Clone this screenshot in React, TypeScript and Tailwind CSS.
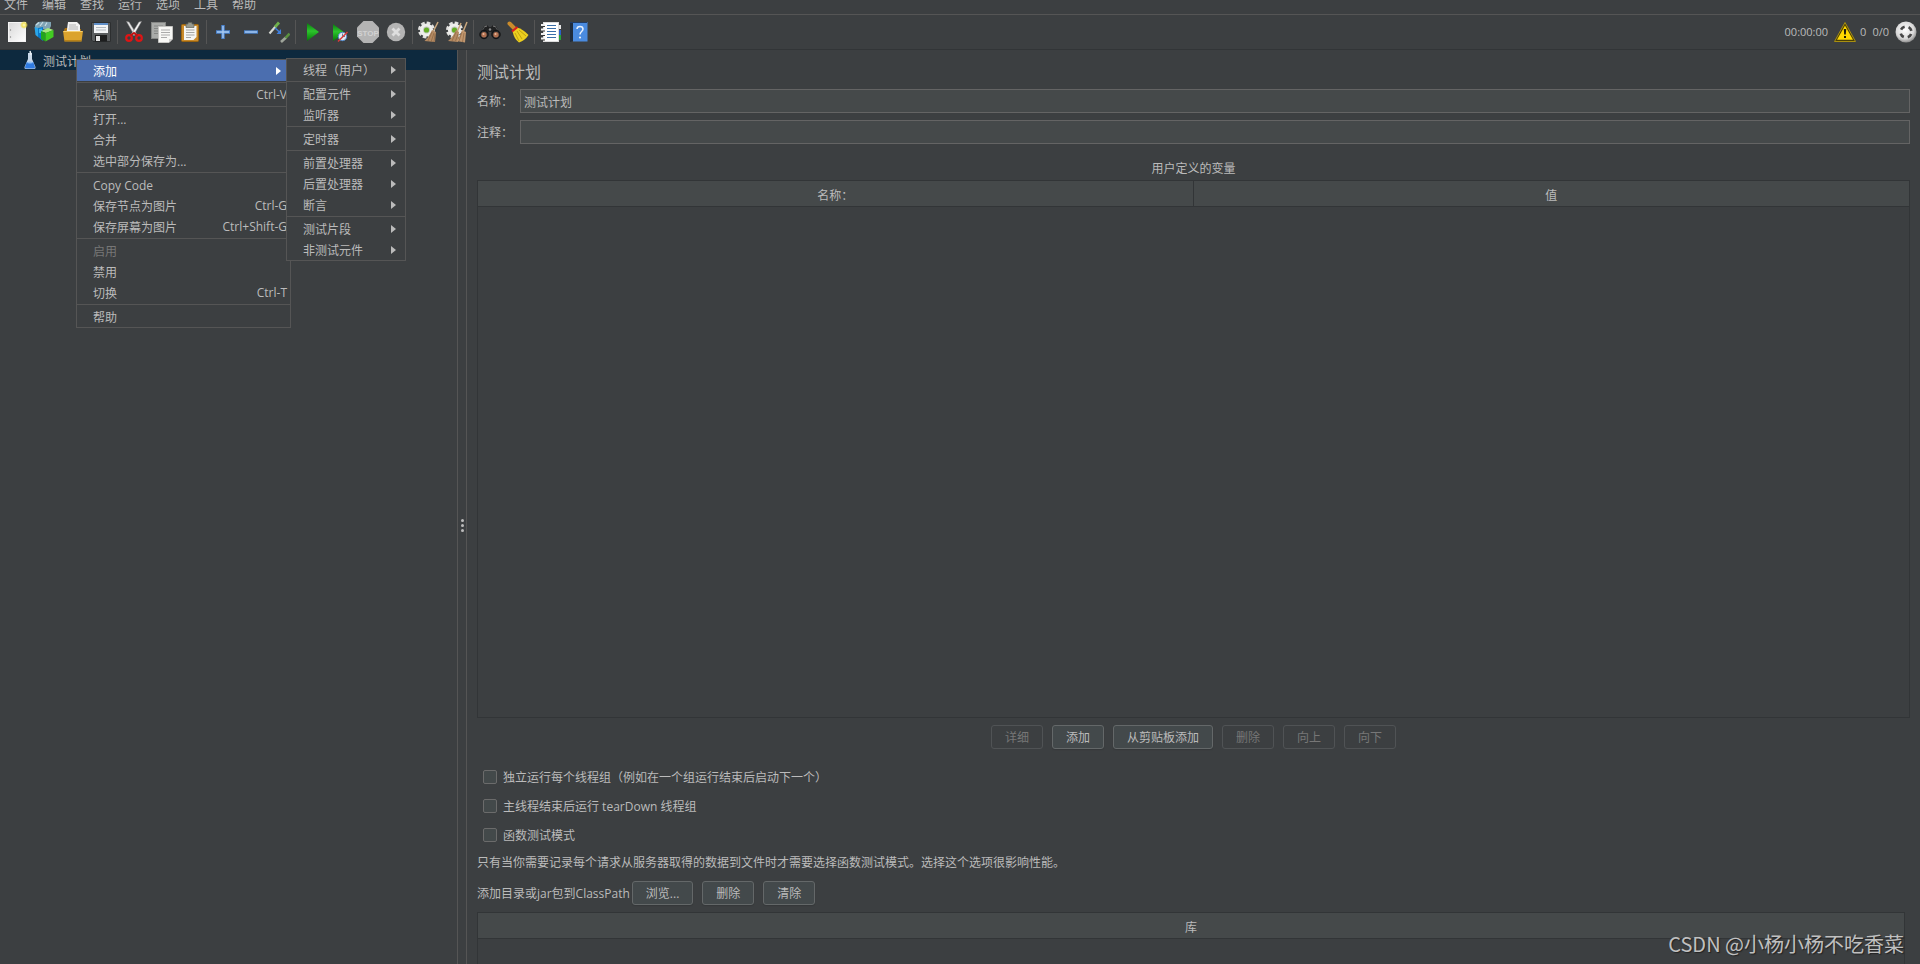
import React from "react";

type MenuEntry = {
  label: string;
  shortcut?: string;
  submenu?: boolean;
  active?: boolean;
  disabled?: boolean;
};

const menuBar = ["文件", "编辑", "查找", "运行", "选项", "工具", "帮助"];

const contextMenu: MenuEntry[][] = [
  [{ label: "添加", submenu: true, active: true }],
  [{ label: "粘贴", shortcut: "Ctrl-V" }],
  [{ label: "打开..." }, { label: "合并" }, { label: "选中部分保存为..." }],
  [
    { label: "Copy Code" },
    { label: "保存节点为图片", shortcut: "Ctrl-G" },
    { label: "保存屏幕为图片", shortcut: "Ctrl+Shift-G" },
  ],
  [{ label: "启用", disabled: true }, { label: "禁用" }, { label: "切换", shortcut: "Ctrl-T" }],
  [{ label: "帮助" }],
];

const addMenu: MenuEntry[][] = [
  [{ label: "线程（用户）", submenu: true }],
  [
    { label: "配置元件", submenu: true },
    { label: "监听器", submenu: true },
  ],
  [{ label: "定时器", submenu: true }],
  [
    { label: "前置处理器", submenu: true },
    { label: "后置处理器", submenu: true },
    { label: "断言", submenu: true },
  ],
  [
    { label: "测试片段", submenu: true },
    { label: "非测试元件", submenu: true },
  ],
];

function Icon({ children }: { children: React.ReactNode }) {
  return (
    <svg viewBox="0 0 22 22" className="h-[22px] w-[22px] shrink-0" aria-hidden="true">
      {children}
    </svg>
  );
}

function NewIcon() {
  return (
    <Icon>
      <defs>
        <linearGradient id="paper" x1="0" y1="0" x2="1" y2="1">
          <stop offset="0" stopColor="#d8d8d8" />
          <stop offset="1" stopColor="#ffffff" />
        </linearGradient>
        <radialGradient id="glow">
          <stop offset="0" stopColor="#fffbd0" />
          <stop offset="0.5" stopColor="#f2e25a" />
          <stop offset="1" stopColor="#e8d840" stopOpacity="0" />
        </radialGradient>
      </defs>
      <rect x="2.5" y="1.5" width="17" height="19" fill="url(#paper)" stroke="#f4f4f4" />
      <circle cx="4.5" cy="9" r="0.7" fill="#888" />
      <circle cx="4.5" cy="16" r="0.7" fill="#888" />
      <circle cx="18" cy="4" r="4" fill="url(#glow)" />
    </Icon>
  );
}

function TemplatesIcon() {
  return (
    <Icon>
      <path d="M1 4 L4 1 L9 0.5 L17 1 L17 5 L15 9 L1 7 Z" fill="#7fa3b3" />
      <path d="M2 4 L5 1.5 M6 5 L9 1 M11 5 L13 1.5" stroke="#c9dde6" strokeWidth="1.2" />
      <path d="M0.5 6 L4 7 V16 L1.5 14 Z" fill="#2aa6ea" />
      <path d="M4 7 L9 6 V20 L4 16 Z" fill="#0a78c8" />
      <path d="M5 8 L8 7.5 V12 L5 12 Z" fill="#35b5f5" />
      <path d="M7 10 L14 7 L19.5 9 L12 12 Z" fill="#a6e87e" />
      <path d="M7 10 L11.5 12 V20.5 L7 18 Z" fill="#23a51c" />
      <path d="M11.5 12 L19.5 9 V16 L11.5 20.5 Z" fill="#42cc22" />
    </Icon>
  );
}

function OpenIcon() {
  return (
    <Icon>
      <path d="M2 9 L3 7 H8 L9 8 H19 V12 H2 Z" fill="#a87010" />
      <path d="M6 1 H15 L18 4 V12 H4.5 Z" fill="#f2f2f2" />
      <path d="M7 4 H14 M7 6 H16 M6.5 8 H16" stroke="#a5a5a5" strokeWidth="0.8" />
      <path d="M1 10 H21 L19.5 20.5 H2.5 Z" fill="#dba32d" />
      <path d="M1.5 10.5 H20.5" stroke="#f5cf70" />
      <path d="M2.5 19.8 H19.5" stroke="#a8720f" />
    </Icon>
  );
}

function SaveIcon() {
  return (
    <Icon>
      <path d="M1.5 1.5 H20.5 V20.5 H3 L1.5 19 Z" fill="#5b5e60" stroke="#2d2f30" />
      <rect x="4" y="2" width="14" height="10" fill="#f2f4f6" />
      <rect x="4" y="2" width="14" height="2" fill="#5f8fc9" />
      <path d="M6 6.5 H16 M6 9 H16" stroke="#b3bac0" />
      <rect x="5" y="14" width="12" height="6.5" fill="#1d1e1f" />
      <rect x="6" y="15" width="4" height="5" fill="#e8e8e8" />
    </Icon>
  );
}

function CutIcon() {
  return (
    <Icon>
      <path d="M3.5 0.5 L6 1 L13.5 13 L11.5 14.5 Z" fill="#e8e8e8" stroke="#8d8d8d" strokeWidth="0.5" />
      <path d="M18.5 0.5 L16 1 L8.5 13 L10.5 14.5 Z" fill="#f7f7f7" stroke="#8d8d8d" strokeWidth="0.5" />
      <circle cx="6" cy="17" r="2.8" fill="none" stroke="#dd1515" strokeWidth="2.2" />
      <circle cx="16" cy="17" r="2.8" fill="none" stroke="#dd1515" strokeWidth="2.2" />
      <path d="M7.5 14.5 L11 12 L14.5 14.5" fill="none" stroke="#c01010" strokeWidth="2" />
    </Icon>
  );
}

function CopyIcon() {
  return (
    <Icon>
      <rect x="0.5" y="1.5" width="14" height="16" fill="#a9aba9" stroke="#858785" />
      <path d="M3 5 H12 M3 7.5 H12 M3 10 H8 M3 12.5 H8" stroke="#858785" />
      <path d="M7.5 5.5 H21.5 V18 L18 21.5 H7.5 Z" fill="#f7f7f5" stroke="#c5c5c2" />
      <path d="M10 9 H19 M10 11.5 H19 M10 14 H19 M10 16.5 H16" stroke="#aaa" />
      <path d="M18 21.5 V18 H21.5 Z" fill="#cfcfcc" />
    </Icon>
  );
}

function PasteIcon() {
  return (
    <Icon>
      <rect x="2.5" y="3.5" width="17" height="17" rx="1" fill="#c98a2b" stroke="#9a640f" />
      <path d="M5 5 H17.5 V16 L14.5 19 H5 Z" fill="#f5f5f3" />
      <path d="M7 9 H15.5 M7 11.5 H15.5 M7 14 H15.5 M7 16.5 H12" stroke="#a5a5a3" />
      <path d="M7 3 H9 V1.5 H13 V3 H15 V6.5 H7 Z" fill="#96998f" stroke="#63665c" strokeWidth="0.7" />
    </Icon>
  );
}

function PlusIcon() {
  return (
    <Icon>
      <path d="M11 4 V18 M4 11 H18" stroke="#4a84d0" strokeWidth="3.4" />
      <path d="M11 5 V17 M5 11 H17" stroke="#a9cbf2" strokeWidth="1.4" />
    </Icon>
  );
}

function MinusIcon() {
  return (
    <Icon>
      <path d="M4 11 H18" stroke="#4a84d0" strokeWidth="3.4" />
      <path d="M5 11 H17" stroke="#a9cbf2" strokeWidth="1.4" />
    </Icon>
  );
}

function ToggleIcon() {
  return (
    <Icon>
      <path d="M1.5 12.5 L7.5 5.5" stroke="#d6d8d2" strokeWidth="2.2" />
      <path d="M7 6 L11 1.5" stroke="#6fb04c" strokeWidth="2.8" />
      <path d="M7 7 L12 11.5" stroke="#3f7fdd" strokeWidth="1.5" />
      <path d="M13 8 V13 H8.5 Z" fill="#3f7fdd" />
      <path d="M13 21 L18 16.5" stroke="#9fa59a" strokeWidth="2.6" />
      <path d="M17.5 17 L21.5 12.5" stroke="#5b9140" strokeWidth="2.6" />
    </Icon>
  );
}

function PlayIcon() {
  return (
    <Icon>
      <defs>
        <linearGradient id="play" x1="0" y1="0" x2="0" y2="1">
          <stop offset="0" stopColor="#0b7a10" />
          <stop offset="0.45" stopColor="#2cc42c" />
          <stop offset="1" stopColor="#067808" />
        </linearGradient>
      </defs>
      <path d="M6 2 L18 11 L6 20 Z" fill="url(#play)" />
    </Icon>
  );
}

function PlayNoTimersIcon() {
  return (
    <Icon>
      <path d="M4 3 L16 12 L4 20 Z" fill="url(#play)" />
      <circle cx="13.5" cy="15.5" r="4.2" fill="#dfe8f2" stroke="#4f86c6" />
      <path d="M13.5 12.5 V15.5 H16" fill="none" stroke="#44658c" strokeWidth="0.8" />
      <path d="M9 20.5 L18.5 11" stroke="#dc3b3b" strokeWidth="1.4" />
    </Icon>
  );
}

function StopIcon() {
  return (
    <Icon>
      <path d="M6.5 0 H15.5 L22 6.5 V15.5 L15.5 22 H6.5 L0 15.5 V6.5 Z" fill="#b4b4b4" />
      <text x="11" y="14.5" textAnchor="middle" fontSize="8" fontWeight="700" fill="#d2d2d2" fontFamily="Liberation Sans">
        STOP
      </text>
    </Icon>
  );
}

function ShutdownIcon() {
  return (
    <Icon>
      <circle cx="11" cy="11" r="9.2" fill="#b4b4b4" />
      <path d="M7.5 7.5 L14.5 14.5 M14.5 7.5 L7.5 14.5" stroke="#dedede" strokeWidth="2.8" />
    </Icon>
  );
}

function Gear() {
  return (
    <g>
      <circle cx="8.5" cy="9" r="7.2" fill="none" stroke="#e2e2e0" strokeWidth="2.6" strokeDasharray="3.65 2" />
      <circle cx="8.5" cy="9" r="6.6" fill="#eeeeec" />
      <circle cx="8.5" cy="9" r="3.4" fill="#c4c8c0" />
      <circle cx="8.5" cy="9" r="2.6" fill="#64ad25" />
    </g>
  );
}

function ClearIcon() {
  return (
    <Icon>
      <Gear />
      <path d="M20 1 L15 11" stroke="#c9a77d" strokeWidth="1.5" />
      <path d="M14 9 L18 11 L17 21 L6.5 20 Q11 16 14 9 Z" fill="#b48a63" />
      <path d="M14 11 L10 20 M16 12 L13 21 M17 13 L16 21" stroke="#8d6642" strokeWidth="0.7" />
    </Icon>
  );
}

function ClearAllIcon() {
  return (
    <Icon>
      <Gear />
      <path d="M15 2 L11 11 M21 1 L17 11" stroke="#c9a77d" strokeWidth="1.5" />
      <path d="M10 9 L13 11 L12 21 L2 20 Q7 16 10 9 Z" fill="#b48a63" />
      <path d="M16 9 L20 11 L19 21.5 L10.5 20 Q14 16 16 9 Z" fill="#c0966e" />
      <path d="M10 11 L6 20 M12 13 L9.500 20 M16 11 L13 20 M18 12 L16.5 21" stroke="#8d6642" strokeWidth="0.7" />
    </Icon>
  );
}

function BinocularsIcon() {
  return (
    <Icon>
      <path d="M5 5 L8 4 L10 6 H12 L14 4 L17 5 L21 13 H13 L12.5 11 H9.5 L9 13 H1 Z" fill="#202122" />
      <path d="M5.5 5.5 L8 5 M14 5 L16.5 5.5" stroke="#888" />
      <path d="M3 10 L5.500 6 M19 10 L16.500 6" stroke="#5d5f61" strokeWidth="0.8" />
      <circle cx="5" cy="13.5" r="4.2" fill="#26282a" stroke="#0f1011" />
      <circle cx="17" cy="13.5" r="4.2" fill="#26282a" stroke="#0f1011" />
      <circle cx="5" cy="13.8" r="2.7" fill="#b06f4f" />
      <circle cx="17" cy="13.8" r="2.7" fill="#b06f4f" />
      <circle cx="4.5" cy="13" r="1" fill="#e6b79c" />
      <circle cx="16.5" cy="13" r="1" fill="#e6b79c" />
      <circle cx="11" cy="8.5" r="1.2" fill="#8c8c8c" />
    </Icon>
  );
}

function BroomIcon() {
  return (
    <Icon>
      <path d="M2.5 2.5 L8 8" stroke="#c98b2b" strokeWidth="4" strokeLinecap="round" />
      <path d="M10 6.5 Q16 8 21.5 14 Q18 19.5 12 21.5 Q7 18 5.500 10 Z" fill="#eccf1f" />
      <path d="M10 10 L15 18 M12 9 L19 15 M8 12 L12 20" stroke="#b3950c" strokeWidth="0.8" />
      <path d="M5 10.5 L10.5 6" stroke="#d81e1e" strokeWidth="2.2" />
    </Icon>
  );
}

function FunctionListIcon() {
  return (
    <Icon>
      <rect x="17" y="4" width="4" height="4" fill="#e8e8e8" />
      <rect x="17" y="9" width="4" height="5" fill="#2b62c9" />
      <rect x="17" y="14" width="4" height="5" fill="#24a33a" />
      <rect x="3.5" y="1.5" width="15" height="19" fill="#ffffff" stroke="#dcdcdc" />
      <path d="M7 4.5 H16 M7 7.5 H16 M7 10.5 H16 M7 13.5 H16 M7 16.5 H16" stroke="#3a6ea8" />
      <path d="M1 4 H5 M1 8.5 H5 M1 13 H5 M1 17.5 H5" stroke="#f0f0f0" strokeWidth="2" />
      <path d="M3 5.5 H5 M3 10 H5 M3 14.5 H5 M3 19 H5" stroke="#333" />
    </Icon>
  );
}

function HelpIcon() {
  return (
    <Icon>
      <path d="M2 2 L5 1 V20 L2 21 Z" fill="#1f2c3d" />
      <rect x="5" y="1" width="14.5" height="19.5" fill="#4a8be0" />
      <path d="M2 1.5 H19" stroke="#223c63" />
      <path d="M9 8 C9 4.5 15 4.5 15 8 C15 10.5 12 10.5 12 13.5" fill="none" stroke="#e8f1fd" strokeWidth="1.5" />
      <circle cx="12" cy="16.5" r="1.1" fill="#e8f1fd" />
    </Icon>
  );
}

function WarningIcon() {
  return (
    <Icon>
      <path d="M11 1.5 L21.5 20.5 H0.5 Z" fill="#4a3f06" stroke="#a88f10" strokeLinejoin="round" />
      <path d="M11 4.5 L19 18.8 H3 Z" fill="#ffd800" />
      <path d="M9.8 8 H12.2 L11.8 13.5 H10.2 Z" fill="#1c1a08" />
      <rect x="10" y="15" width="2" height="2" fill="#1c1a08" />
    </Icon>
  );
}

function ThreadsIcon() {
  return (
    <Icon>
      <defs>
        <radialGradient id="ball" cx="0.45" cy="0.4" r="0.6">
          <stop offset="0" stopColor="#ffffff" />
          <stop offset="0.7" stopColor="#d9d9d9" />
          <stop offset="1" stopColor="#8f8f8f" />
        </radialGradient>
      </defs>
      <circle cx="11" cy="11" r="10.5" fill="url(#ball)" />
      <circle
        cx="11"
        cy="11"
        r="5.5"
        fill="none"
        stroke="#474747"
        strokeWidth="2.6"
        strokeDasharray="4.5 4.14"
        strokeDashoffset="-2.07"
      />
    </Icon>
  );
}

function FlaskIcon() {
  return (
    <svg viewBox="0 0 12 20" className="h-5 w-3 shrink-0" aria-hidden="true">
      <path d="M4 3 H8 V9 L11.5 17 Q12 19 10 19 H2 Q0 19 0.5 17 L4 9 Z" fill="#c9d8e8" />
      <path d="M2.8 12 H9.2 L11 17 Q11 18.5 9.5 18.5 H2.5 Q1 18.5 1 17 Z" fill="#2f7be0" />
      <ellipse cx="6" cy="12.5" rx="3" ry="1" fill="#8fc0f5" />
      <path d="M6 1 L7 5" stroke="#e8eef5" strokeWidth="1.5" />
    </svg>
  );
}

const toolbar = [
  [
    { name: "新建", icon: NewIcon },
    { name: "模板", icon: TemplatesIcon },
    { name: "打开", icon: OpenIcon },
    { name: "保存", icon: SaveIcon },
  ],
  [
    { name: "剪切", icon: CutIcon },
    { name: "复制", icon: CopyIcon },
    { name: "粘贴", icon: PasteIcon },
  ],
  [
    { name: "全部展开", icon: PlusIcon },
    { name: "全部折叠", icon: MinusIcon },
    { name: "切换", icon: ToggleIcon },
  ],
  [
    { name: "启动", icon: PlayIcon },
    { name: "不停顿启动", icon: PlayNoTimersIcon },
    { name: "停止", icon: StopIcon },
    { name: "关闭", icon: ShutdownIcon },
  ],
  [
    { name: "清除", icon: ClearIcon },
    { name: "清除全部", icon: ClearAllIcon },
  ],
  [
    { name: "查找", icon: BinocularsIcon },
    { name: "重置搜索", icon: BroomIcon },
  ],
  [
    { name: "函数助手", icon: FunctionListIcon },
    { name: "帮助文档", icon: HelpIcon },
  ],
];

function PopupMenu({ groups, className }: { groups: MenuEntry[][]; className: string }) {
  return (
    <div role="menu" className={`absolute border border-[#555555] bg-[#3c3f41] ${className}`}>
      {groups.map((group, i) => (
        <React.Fragment key={i}>
          {i > 0 && (
            <div className="h-[3px] py-px">
              <div className="h-px bg-[#555555]" />
            </div>
          )}
          {group.map((item) => (
            <button
              key={item.label}
              role="menuitem"
              disabled={item.disabled}
              className={`flex h-[21px] w-full items-center justify-between pl-4 whitespace-nowrap ${
                item.submenu ? "pr-[9px]" : "pr-[3px]"
              } ${item.active ? "bg-[#4b6eaf] text-white" : item.disabled ? "text-[#777777]" : ""}`}
            >
              <span className="pt-0.5">{item.label}</span>
              {item.shortcut && <span className="pt-px">{item.shortcut}</span>}
              {item.submenu && (
                <svg viewBox="0 0 5 8" className="h-2 w-[5px]" fill="currentColor" aria-hidden="true">
                  <path d="M0 0 L5 4 L0 8 Z" />
                </svg>
              )}
            </button>
          ))}
        </React.Fragment>
      ))}
    </div>
  );
}

function Button({ children, disabled }: { children: React.ReactNode; disabled?: boolean }) {
  return (
    <button
      disabled={disabled}
      className={`h-6 rounded-[3px] border px-[13px] pt-0.5 ${
        disabled
          ? "border-[#505355] text-[#777777]"
          : "border-[#646869] bg-[#43494b] shadow-[0_1px_1px_#35383a]"
      }`}
    >
      {children}
    </button>
  );
}

function Field({ id, label, value }: { id: string; label: string; value: string }) {
  return (
    <div className="flex items-center">
      <label htmlFor={id} className="w-[43px] shrink-0 pt-0.5">
        {label}
      </label>
      <input
        id={id}
        defaultValue={value}
        className="h-6 min-w-0 flex-1 border border-[#646464] bg-[#45494a] px-[3px] pt-0.5 outline-none"
      />
    </div>
  );
}

function Check({ label }: { label: string }) {
  return (
    <label className="flex h-[29px] items-center gap-1.5 pl-1.5">
      <input
        type="checkbox"
        className="h-3.5 w-3.5 appearance-none rounded-[2px] border border-[#6b6b6b] bg-[#43494a]"
      />
      <span className="pt-0.5">{label}</span>
    </label>
  );
}

export default function App() {
  return (
    <div className="relative flex h-screen flex-col overflow-hidden bg-[#3c3f41] font-['Open_Sans','Noto_Sans_CJK_SC',sans-serif] text-xs text-[#bbbbbb]">
      {/* Menu bar */}
      <nav className="flex h-[15px] shrink-0 items-start gap-3.5 border-b border-[#555555] pl-1">
        {menuBar.map((item) => (
          <button key={item} className="leading-[10px]">
            {item}
          </button>
        ))}
      </nav>

      {/* Toolbar */}
      <div className="flex h-[35px] shrink-0 items-center justify-between border-b border-[#323537] px-[3px]">
        <div className="flex items-center">
          {toolbar.map((group, i) => (
            <React.Fragment key={i}>
              {i > 0 && <div className="mx-0.5 h-6 w-px bg-[#555555]" />}
              {group.map(({ name, icon: ToolIcon }) => (
                <button key={name} aria-label={name} className="flex h-7 w-7 items-center justify-center">
                  <ToolIcon />
                </button>
              ))}
            </React.Fragment>
          ))}
        </div>
        <div className="flex items-center text-[11px]">
          <span className="mr-1.5">00:00:00</span>
          <WarningIcon />
          <span className="ml-1">0</span>
          <span className="mx-1.5">0/0</span>
          <ThreadsIcon />
        </div>
      </div>

      <div className="flex min-h-0 flex-1">
        {/* Test plan tree */}
        <aside className="w-[458px] shrink-0 border-r border-[#555555]">
          <div className="flex h-5 items-center gap-[7px] bg-[#0d293e] pl-6">
            <FlaskIcon />
            <span className="pt-1">测试计划</span>
          </div>
        </aside>

        {/* Splitter */}
        <div className="flex w-[9px] shrink-0 flex-col items-center justify-center gap-0.5 border-r border-[#555555] pt-9">
          <i className="h-[3px] w-[3px] rounded-full bg-[#bbbbbb]" />
          <i className="h-[3px] w-[3px] rounded-full bg-[#bbbbbb]" />
          <i className="h-[3px] w-[3px] rounded-full bg-[#bbbbbb]" />
        </div>

        <main className="flex min-w-0 flex-1 flex-col px-2.5 pt-2.5">
          <h1 className="mb-[5px] text-base leading-6">测试计划</h1>
          <div className="flex flex-col gap-[7px]">
            <Field id="plan-name" label="名称：" value="测试计划" />
            <Field id="plan-comment" label="注释：" value="" />
          </div>

          {/* User defined variables */}
          <h2 className="mt-[15px] mb-px text-center leading-5">用户定义的变量</h2>
          <div className="min-h-0 flex-1 border border-[#323537]">
            <table className="w-full table-fixed border-separate border-spacing-0">
              <thead>
                <tr className="h-[26px] bg-[#45494a]">
                  <th className="border-r border-b border-[#323537] p-0 pt-1 font-normal">名称：</th>
                  <th className="border-b border-[#323537] p-0 pt-1 font-normal">值</th>
                </tr>
              </thead>
            </table>
          </div>
          <div className="mt-[7px] flex justify-center gap-[9px]">
            <Button disabled>详细</Button>
            <Button>添加</Button>
            <Button>从剪贴板添加</Button>
            <Button disabled>删除</Button>
            <Button disabled>向上</Button>
            <Button disabled>向下</Button>
          </div>

          {/* Run options */}
          <div className="mt-[13px]">
            <Check label="独立运行每个线程组（例如在一个组运行结束后启动下一个）" />
            <Check label="主线程结束后运行 tearDown 线程组" />
            <Check label="函数测试模式" />
          </div>
          <p className="mt-1 leading-5">
            只有当你需要记录每个请求从服务器取得的数据到文件时才需要选择函数测试模式。选择这个选项很影响性能。
          </p>

          {/* Classpath */}
          <div className="mt-2 flex items-center gap-0.5">
            <span className="pt-0.5">添加目录或jar包到ClassPath</span>
            <div className="flex gap-[9px]">
              <Button>浏览...</Button>
              <Button>删除</Button>
              <Button>清除</Button>
            </div>
          </div>
          <div className="mt-[7px] mr-[5px] h-[52px] shrink-0 border border-b-0 border-[#323537]">
            <table className="w-full border-separate border-spacing-0">
              <thead>
                <tr className="h-[26px] bg-[#45494a]">
                  <th className="border-b border-[#323537] p-0 pt-1 font-normal">库</th>
                </tr>
              </thead>
            </table>
          </div>
        </main>
      </div>

      <PopupMenu groups={contextMenu} className="top-[59px] left-[76px] w-[215px]" />
      <PopupMenu groups={addMenu} className="top-[58px] left-[286px] w-[120px]" />

      <span className="absolute right-4 bottom-1 font-['Noto_Sans_CJK_SC',sans-serif] text-xl leading-8 text-[#c0c0c0] [text-shadow:1px_1px_1px_#222]">
        CSDN @小杨小杨不吃香菜
      </span>
    </div>
  );
}
